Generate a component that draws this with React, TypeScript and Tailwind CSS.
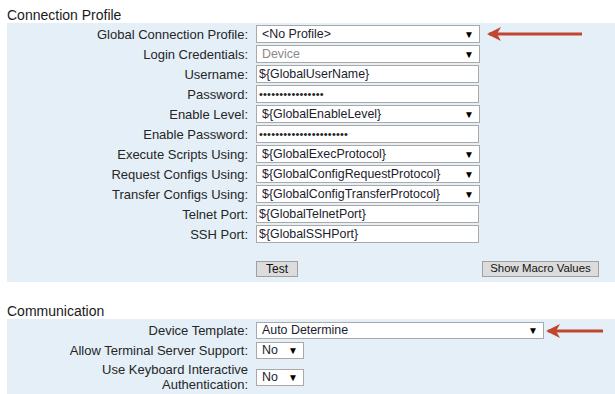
import React from "react"

const FONT = "font-['Liberation_Sans',Arial,sans-serif]"

function Arrow({ width }: { width: number }) {
  return (
    <svg width={width} height="16" viewBox={`0 0 ${width} 16`} className="shrink-0">
      <line x1="3" y1="8" x2={width} y2="8" stroke="#c0462f" strokeWidth="3" />
      <path d="M1 8 L15 1 L11 8 L15 15 Z" fill="#c0462f" />
    </svg>
  )
}

function Select({ value, w, muted, h = "h-[18px]" }: { value: string; w: string; muted?: boolean; h?: string }) {
  return (
    <div className={`flex ${h} ${w} items-center justify-between border border-[#a9a9a9] bg-white pl-[5px] pr-[5px]`}>
      <span className={`text-[12.4px] ${muted ? "text-[#8a8a8a]" : "text-[#1c1c2e]"}`}>{value}</span>
      <span className="text-[10px] text-black">▼</span>
    </div>
  )
}

function TextBox({ value, password, dots = 0 }: { value?: string; password?: boolean; dots?: number }) {
  return (
    <div className="flex h-[18px] w-[223px] items-center border border-[#a9a9a9] bg-white pl-[2px]">
      {password ? (
        <span className="text-[11px] leading-none tracking-[0.2px] text-[#222]">{"•".repeat(dots)}</span>
      ) : (
        <span className="text-[12.4px] text-[#1c1c2e]">{value}</span>
      )}
    </div>
  )
}

function Row({ label, children }: { label: React.ReactNode; children: React.ReactNode }) {
  return (
    <div className="flex items-center">
      <div className="w-[241px] shrink-0 text-right leading-[15px] text-[#262626]">{label}</div>
      <div className="ml-[8px] flex items-center">{children}</div>
    </div>
  )
}

export default function App() {
  return (
    <div className={`${FONT} h-[394px] w-[615px] overflow-hidden bg-white text-[13px]`}>
      <div className="pl-[7px] pt-[7px] text-[14px] leading-[16px] text-[#1a1a1a]">Connection Profile</div>
      <div className="ml-[7px] bg-[#e4eff7] pt-[2px] pb-[5px]">
        <div className="flex flex-col gap-[2px]">
          <Row label="Global Connection Profile:">
            <Select value="<No Profile>" w="w-[224px]" />
            <div className="ml-[6px]">
              <Arrow width={96} />
            </div>
          </Row>
          <Row label="Login Credentials:">
            <Select value="Device" w="w-[224px]" muted />
          </Row>
          <Row label="Username:">
            <TextBox value="${GlobalUserName}" />
          </Row>
          <Row label="Password:">
            <TextBox password dots={16} />
          </Row>
          <Row label="Enable Level:">
            <Select value="${GlobalEnableLevel}" w="w-[224px]" />
          </Row>
          <Row label="Enable Password:">
            <TextBox password dots={22} />
          </Row>
          <Row label="Execute Scripts Using:">
            <Select value="${GlobalExecProtocol}" w="w-[224px]" />
          </Row>
          <Row label="Request Configs Using:">
            <Select value="${GlobalConfigRequestProtocol}" w="w-[224px]" />
          </Row>
          <Row label="Transfer Configs Using:">
            <Select value="${GlobalConfigTransferProtocol}" w="w-[224px]" />
          </Row>
          <Row label="Telnet Port:">
            <TextBox value="${GlobalTelnetPort}" />
          </Row>
          <Row label="SSH Port:">
            <TextBox value="${GlobalSSHPort}" />
          </Row>
        </div>
        <div className="mt-[18px] flex items-center pl-[249px] pr-[16px]">
          <button className="h-[16px] w-[42px] border border-[#a0a0a0] bg-[#dcdcdc] text-[12px] leading-none text-[#111]">
            Test
          </button>
          <button className="ml-auto h-[16px] w-[117px] border border-[#a0a0a0] bg-[#dcdcdc] text-[11.4px] leading-none text-[#111]">
            Show Macro Values
          </button>
        </div>
      </div>

      <div className="pl-[7px] pt-[21px] text-[14px] leading-[16px] text-[#1a1a1a]">Communication</div>
      <div className="ml-[7px] bg-[#e4eff7] pt-[3px] pb-[10px]">
        <div className="flex flex-col gap-[3px]">
          <Row label="Device Template:">
            <Select value="Auto Determine" w="w-[288px]" h="h-[17px]" />
            <div className="ml-[1px]">
              <Arrow width={58} />
            </div>
          </Row>
          <Row label="Allow Terminal Server Support:">
            <Select value="No" w="w-[48px]" h="h-[17px]" />
          </Row>
          <Row
            label={
              <>
                Use Keyboard Interactive
                <br />
                Authentication:
              </>
            }
          >
            <Select value="No" w="w-[48px]" h="h-[17px]" />
          </Row>
        </div>
      </div>
    </div>
  )
}
